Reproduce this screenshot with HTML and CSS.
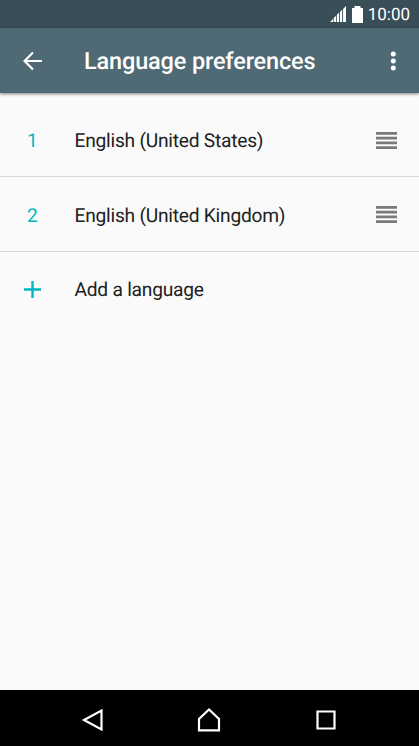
FILE: index.html
```html
<!DOCTYPE html>
<html lang="en">
<head>
<meta charset="utf-8">
<title>Language preferences</title>
<link rel="stylesheet" href="styles.css">
</head>
<body>
<div class="status">
  <svg class="signal" width="16" height="16" viewBox="0 0 16 16"><path d="M0 16l3-3v3zM3.700 16v-4L6 9.800V16zM6.800 16V9L9 6.800V16zM9.900 16V6L12.200 3.700V16zM13.100 16V2.900L16 0v16z"/></svg>
  <svg class="battery" width="11" height="17" viewBox="0 0 11 17"><path d="M2.500 0h6v2H11v15H0V2h2.500z"/></svg>
  <span>10:00</span>
</div>
<header class="appbar">
  <svg class="back" width="20" height="20" viewBox="0 0 20 20"><path d="M19 10H2M10 1.500L1.500 10l8.500 8.500"/></svg>
  <h1>Language preferences</h1>
  <svg class="more" width="6" height="20" viewBox="0 0 6 20"><circle cx="3.300" cy="3" r="2.500"/><circle cx="3.300" cy="10" r="2.500"/><circle cx="3.300" cy="17" r="2.500"/></svg>
</header>
<main>
  <div class="row"><span class="num">1</span><span class="label">English (United States)</span><svg class="grip" width="21" height="17" viewBox="0 0 21 17"><path d="M0 1.400h21M0 6.100h21M0 10.900h21M0 15.600h21"/></svg></div>
  <div class="row second"><span class="num">2</span><span class="label">English (United Kingdom)</span><svg class="grip" width="21" height="17" viewBox="0 0 21 17"><path d="M0 1.400h21M0 6.100h21M0 10.900h21M0 15.600h21"/></svg></div>
  <div class="row add"><svg class="num" width="65" height="18" viewBox="0 0 65 18"><path d="M24 8.500h17M32.500 0v17"/></svg><span class="label">Add a language</span></div>
</main>
<nav>
  <svg width="24" height="24" viewBox="0 0 24 24"><path d="M20.500 2.500v19L3 12z"/></svg>
  <svg class="home" width="24" height="24" viewBox="0 0 24 24"><path d="M12 1.500L2 11v11.300h20V11z"/></svg>
  <svg width="20" height="20" viewBox="0 0 20 20"><path d="M1.500 1.500h17v17h-17z"/></svg>
</nav>
</body>
</html>
```
FILE: styles.css
```css
* { box-sizing: border-box; }
body { margin: 0; height: 746px; display: flex; flex-direction: column; background: #fafafa; font-family: Roboto, sans-serif; color: #212121; overflow: hidden; text-rendering: geometricPrecision; }
.status { height: 28px; flex: none; background: #3a4e58; color: #fff; display: flex; align-items: center; justify-content: flex-end; padding-right: 9px; font-size: 17px; }
.status svg { fill: #fff; }
.status span { padding-top: 2px; }
.signal { margin-right: 6px; }
.battery { margin-right: 5px; }
.appbar { height: 65px; flex: none; background: #4f6975; color: #fff; display: flex; align-items: center; padding: 1px 23px 0; box-shadow: 0 1px 3px rgba(0,0,0,.5); }
h1 { margin: 0 0 0 41px; flex: 1; font-size: 23.500px; font-weight: 500; letter-spacing: -.15px; white-space: nowrap; }
.back { fill: none; stroke: #fff; stroke-width: 2.200; }
.more { fill: #fff; }
main { flex: 1; padding-top: 10px; }
.row { height: 74px; display: flex; align-items: center; border-bottom: 1px solid #d8d8d8; font-size: 19.200px; padding: 1px 22px 0 0; }
.row.second { height: 75px; padding-top: 0; }
.second span { padding-top: 2px; }
.row.add { border: 0; }
.num { width: 65px; text-align: center; color: #00b8c4; }
.add .num { stroke: #00b8c4; stroke-width: 2.400; }
.label { margin-left: 9.500px; flex: 1; letter-spacing: -.24px; }
.grip { stroke: #7a7a7a; stroke-width: 2.700; }
nav { height: 56px; flex: none; background: #000; display: flex; align-items: center; justify-content: space-between; padding: 4px 83px 0 81px; }
nav svg { fill: none; stroke: #fff; stroke-width: 2.200; }
nav .home { margin-right: 3px; }
```
